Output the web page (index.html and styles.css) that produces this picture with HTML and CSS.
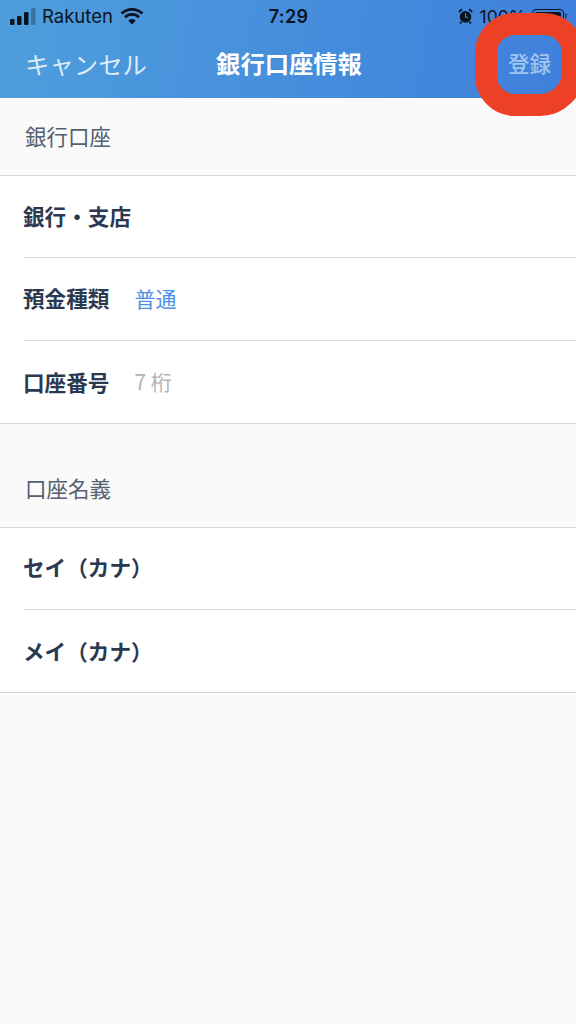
FILE: index.html
```html
<!DOCTYPE html>
<html lang="ja">
<head>
<meta charset="utf-8">
<title>銀行口座情報</title>
<link rel="stylesheet" href="styles.css">
</head>
<body>
<header class="top">
  <div class="status">
    <div class="status-left">
      <svg class="signal" width="26" height="18" viewBox="0 0 26 18"><rect x="0" y="12" width="4.500" height="6" rx="1.2" fill="#0b1420"/><rect x="7" y="9" width="4.500" height="9" rx="1.2" fill="#0b1420"/><rect x="14" y="5" width="4.500" height="13" rx="1.2" fill="#0b1420"/><rect x="21" y="1" width="4.500" height="17" rx="1.2" fill="#0b1420" opacity=".3"/></svg>
      <span class="carrier">Rakuten</span>
      <svg class="wifi" width="24" height="18" viewBox="0 0 24 18"><path d="M12 17.500 8.200 13.600a5.400 5.400 0 0 1 7.600 0Z" fill="#0b1420"/><path d="M1.500 6.600a15 15 0 0 1 21 0M5 10.200a10 10 0 0 1 14 0" fill="none" stroke="#0b1420" stroke-width="2.800"/></svg>
    </div>
    <div class="time">7:29</div>
    <div class="status-right">
      <svg class="alarm" width="15" height="16" viewBox="0 0 16 18"><circle cx="8" cy="10" r="6.500" fill="#0b1420"/><path d="M8 6v4.500h3" fill="none" stroke="#4a8ade" stroke-width="1.200"/><path d="M.5 4.500 4 1.200M15.500 4.500 12 1.200M3.500 15.500 2 17.500M12.500 15.500 14 17.500" stroke="#0b1420" stroke-width="2"/></svg>
      <span class="percent">100%</span>
      <div class="battery"><div class="battery-fill"></div></div>
      <div class="battery-tip"></div>
    </div>
  </div>
  <nav class="nav">
    <span class="cancel">キャンセル</span>
    <h1 class="title">銀行口座情報</h1>
    <span class="submit">登録</span>
  </nav>
  <div class="highlight"></div>
</header>
<main>
  <h2 class="section-head">銀行口座</h2>
  <section class="group">
    <div class="row"><span class="label">銀行・支店</span></div>
    <div class="row"><span class="label">預金種類</span><span class="value blue">普通</span></div>
    <div class="row"><span class="label">口座番号</span><span class="value gray">7 桁</span></div>
  </section>
  <h2 class="section-head second">口座名義</h2>
  <section class="group">
    <div class="row"><span class="label">セイ（カナ）</span></div>
    <div class="row"><span class="label">メイ（カナ）</span></div>
  </section>
</main>
</body>
</html>
```
FILE: styles.css
```css
* { box-sizing: border-box; }
html, body { margin: 0; height: 100%; }
body {
  width: 576px;
  height: 1024px;
  overflow: hidden;
  background: #fafafa;
  font-family: "Noto Sans CJK JP", "Inter", sans-serif;
  color: #2b3950;
}
.top {
  position: relative;
  height: 98px;
  background: linear-gradient(100deg, #4e9edc 0%, #3f7fdc 100%);
}
.status {
  height: 32px;
  display: grid;
  grid-template-columns: 1fr auto 1fr;
  align-items: center;
  color: #0b1420;
  font-family: "Inter", sans-serif;
  font-size: 18.500px;
  padding: 0 9px 0 10px;
}
.status-left { display: flex; align-items: center; }
.carrier { margin-left: 6px; }
.wifi { margin-left: 7px; }
.time { font-weight: 600; font-size: 18px; letter-spacing: .3px; }
.status-right { display: flex; align-items: center; justify-content: flex-end; }
.percent { margin-left: 7px; margin-right: 6px; font-size: 17.500px; }
.battery {
  width: 32px;
  height: 15px;
  border: 1px solid #0b1420;
  border-radius: 4px;
  padding: 2px;
}
.battery-fill { height: 100%; background: #0b1420; border-radius: 2px; }
.battery-tip { width: 2px; height: 6px; margin-left: 1px; background: #0b1420; opacity: .5; border-radius: 0 2px 2px 0; }
.nav {
  height: 66px;
  display: grid;
  grid-template-columns: 1fr auto 1fr;
  align-items: center;
  padding: 0 23px 4px 25px;
}
.cancel { font-size: 24.400px; color: #dcebf8; line-height: 1; margin-top: 2px; }
.title { margin: 0; font-size: 24.300px; font-weight: 700; color: #fff; line-height: 1; }
.submit { justify-self: end; margin-right: 2px; font-size: 21.500px; font-weight: 500; color: #a0c6ef; line-height: 1; }
.highlight {
  position: absolute;
  left: 475px;
  top: 13px;
  width: 109px;
  height: 103px;
  border: 22px solid #ec4125;
  border-radius: 40px 40px 44px 40px;
}
.section-head {
  margin: 0;
  height: 77px;
  padding: 26px 25px 0;
  font-size: 21.500px;
  font-weight: 400;
  line-height: 24px;
  color: #545f6f;
}
.section-head.second { height: 102.400px; padding-top: 52px; }
.group {
  background: #fff;
  border-top: 1px solid #d8d8d8;
  border-bottom: 1px solid #d8d8d8;
  padding-left: 24px;
}
.row {
  height: 82.400px;
  display: flex;
  align-items: center;
  padding-bottom: 2px;
  border-bottom: 1px solid #dcdcdc;
}
.row:last-child { border-bottom: none; padding-bottom: 1px; }
.label {
  font-size: 21.600px;
  font-weight: 700;
  color: #2b3950;
  line-height: 1;
  margin-left: -1px;
}
.value { margin-left: 25px; font-size: 21px; line-height: 1; }
.blue { color: #4f8fe6; }
.gray { color: #b3b3b3; }
```
